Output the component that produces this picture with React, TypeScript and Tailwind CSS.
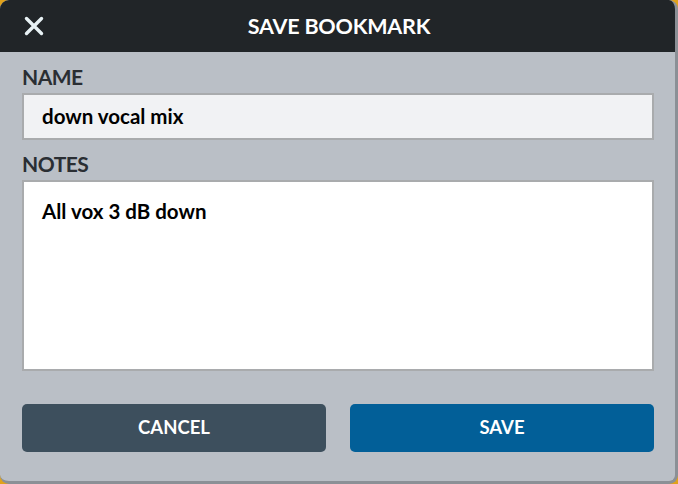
import React from "react";

export default function App() {
  return (
    <div className="w-[678px] h-[484px] bg-[#e0a21c] overflow-hidden" style={{ fontFamily: "Lato, 'Open Sans', sans-serif" }}>
      <div className="w-full h-full rounded-[9px] overflow-hidden bg-[#babfc6] border-r-[3px] border-b-[3px] border-[#8b9096] flex flex-col">
        <div className="h-[52px] shrink-0 bg-[#212528] flex items-center relative">
          <button className="absolute left-[22px] top-[14px] w-[24px] h-[24px] flex items-center justify-center">
            <svg width="22" height="22" viewBox="0 0 22 22">
              <path d="M3.5 3.5 L18.5 18.5 M18.5 3.5 L3.5 18.5" stroke="#e8f2f5" strokeWidth="3.4" strokeLinecap="round" />
            </svg>
          </button>
          <div className="flex-1 text-center text-white font-bold text-[21.5px] tracking-[-0.2px] pl-[3px]">SAVE BOOKMARK</div>
        </div>
        <div className="flex-1 flex flex-col pl-[22px] pr-[21px]">
          <div className="mt-[12px] h-[28px] pb-[4px] flex items-center text-[21px] font-bold text-[#2a2e33] tracking-[-0.5px] leading-none">NAME</div>
          <div className="mt-[1px] h-[47px] bg-[#f1f2f4] border-2 border-[#a9abad] flex items-center pl-[18px] text-[20.5px] font-bold text-black">
            down vocal mix
          </div>
          <div className="mt-[11px] h-[28px] pb-[4px] flex items-center text-[21px] font-bold text-[#2a2e33] tracking-[-0.5px] leading-none">NOTES</div>
          <div className="mt-[1px] h-[191px] bg-white border-2 border-[#a9abad] pl-[18px] pt-[17px] text-[20.5px] font-bold text-black leading-[24px]">
            All vox 3 dB down
          </div>
          <div className="mt-[33px] flex gap-[24px]">
            <button className="flex-1 h-[48px] rounded-[5px] bg-[#3d4f5d] text-white font-bold text-[18.5px]">CANCEL</button>
            <button className="flex-1 h-[48px] rounded-[5px] bg-[#025f98] text-white font-bold text-[18.5px]">SAVE</button>
          </div>
        </div>
      </div>
    </div>
  );
}
